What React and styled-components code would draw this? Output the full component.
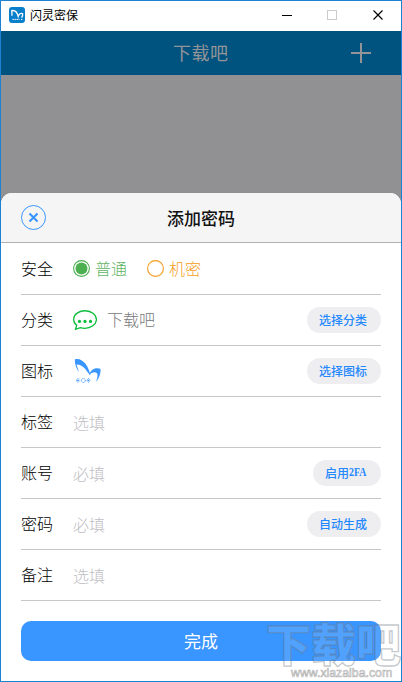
import React, { useState } from 'react';
import styled, { createGlobalStyle } from 'styled-components';

const palette = {
	blue: '#3995ff',
	border: '#1c83d4',
	navy: '#00537f',
	line: '#c7c7c8',
	green: '#4caf50',
	orange: '#f39c22',
};

const levels = [
	{ id: 'normal', label: '普通', color: palette.green, text: '#62b566' },
	{ id: 'secret', label: '机密', color: palette.orange, text: '#f49d20' },
];

export default function App() {
	const [level, setLevel] = useState('normal');

	return (
		<>
			<GlobalStyle />
			<Window>
				<TitleBar>
					<AppIcon viewBox="0 0 16 16">
						<rect width="16" height="16" rx="3" fill="#087fcb" />
						<path
							d="M3 8.8 2.8 3.6C6.2 3 8.2 5.6 9.2 9.4 10 7 11.8 5.8 13.6 6.6 13.9 8.2 13.4 9.6 12.6 10.6"
							fill="none"
							stroke="#fff"
							strokeWidth="1.3"
						/>
						<path d="M3.5 12.4h7M12 12.4h1.5" stroke="#fff" strokeDasharray="1.4 .6" />
					</AppIcon>
					<AppName>闪灵密保</AppName>
					<WindowControls viewBox="0 0 104 12" fill="none" shapeRendering="crispEdges">
						<path d="M0 6.5h10" stroke="#000" />
						<rect x="45.5" y="1.5" width="9" height="9" stroke="#ccc" />
						<path d="M91.5 1.5l9 9M100.5 1.5l-9 9" stroke="#000" strokeWidth="1.2" shapeRendering="auto" />
					</WindowControls>
				</TitleBar>
				<NavBar>
					<NavTitle>下载吧</NavTitle>
					<AddIcon viewBox="0 0 20 20">
						<path d="M0 10h20M10 0v20" stroke="#949498" strokeWidth="2" />
					</AddIcon>
				</NavBar>
				<Sheet>
					<SheetHeader>
						<CloseIcon viewBox="0 0 25 25" fill="none" stroke={palette.blue}>
							<circle cx="12.5" cy="12.5" r="12" />
							<path d="M8.5 8.5l8 8M16.5 8.5l-8 8" strokeWidth="2.1" />
						</CloseIcon>
						添加密码
					</SheetHeader>
					<Form>
						<Row $first>
							<Label>安全</Label>
							{levels.map(item => (
								<Option key={item.id} $color={item.text} onClick={() => setLevel(item.id)}>
									<RadioIcon viewBox="0 0 17 17" fill="none">
										<circle cx="8.5" cy="8.5" r="7.9" stroke={item.color} strokeWidth="1.1" />
										{level === item.id && <circle cx="8.5" cy="8.5" r="6" fill={item.color} />}
									</RadioIcon>
									<Text>{item.label}</Text>
								</Option>
							))}
						</Row>
						<Row>
							<Label>分类</Label>
							<ChatIcon viewBox="0 0 24 20" fill="none">
								<path
									d="M3.7 15.2C-.8 11.6-.1 5.7 4.5 2.9c4.5-3 11.1-2.9 15.5.4 4.8 3.5 4.4 9.4-.2 12.5-3.7 2.5-8.3 3-12.5 1.8L2.5 19.3l1.2-4.1Z"
									stroke="#0bbd3b"
									strokeWidth="1.3"
								/>
								<g fill="#0bbd3b">
									<circle cx="6.5" cy="11.4" r="1.6" />
									<circle cx="12" cy="11.4" r="1.6" />
									<circle cx="17.5" cy="11.4" r="1.6" />
								</g>
							</ChatIcon>
							<Category>下载吧</Category>
							<Pill>选择分类</Pill>
						</Row>
						<Row>
							<Label>图标</Label>
							<LogoIcon viewBox="0 0 28 26">
								<g fill={palette.blue}>
									<path d="M2 1.2C9.5-.8 15.8 8.1 17.5 17.5 13.7 13.7 11 6.6 3.5 6.5L6 14.2C3 9.7 1.4 5.2 2 1.2Z" />
									<path d="M16.4 16.5C17.6 11.7 21.9 8.9 27.4 10.7 28.1 14.7 26.4 20.6 22.7 24 24.5 20.3 24.9 17.1 24.1 15.3 21.4 13.2 18.7 14.8 16.4 16.5Z" />
								</g>
								<path
									d="M3 22.5h4M5 20v5M3.5 21l3 3M6.5 21l-3 3M13.5 22.5h4M15.5 20v5M14 21l3 3M17 21l-3 3"
									stroke={palette.blue}
									strokeWidth=".7"
									strokeDasharray="1.2 .6"
								/>
								<circle
									cx="10.3"
									cy="22.5"
									r="2"
									fill="none"
									stroke={palette.blue}
									strokeWidth=".9"
									strokeDasharray="1.2 .6"
								/>
							</LogoIcon>
							<Pill>选择图标</Pill>
						</Row>
						<Row>
							<Label>标签</Label>
							<Field placeholder="选填" />
						</Row>
						<Row>
							<Label>账号</Label>
							<Field placeholder="必填" />
							<Pill $narrow>
								启用<Latin>2FA</Latin>
							</Pill>
						</Row>
						<Row>
							<Label>密码</Label>
							<Field placeholder="必填" />
							<Pill>自动生成</Pill>
						</Row>
						<Row>
							<Label>备注</Label>
							<Field placeholder="选填" />
						</Row>
						<Submit>完成</Submit>
					</Form>
				</Sheet>
				<Watermark>
					<WatermarkName>下载吧</WatermarkName>
					<WatermarkUrl>www.xiazaiba.com</WatermarkUrl>
				</Watermark>
			</Window>
		</>
	);
}

const GlobalStyle = createGlobalStyle`
	* {
		box-sizing: border-box;
	}

	body {
		margin: 0;
		overflow: hidden;
	}

	body, button, input {
		font-family: 'Noto Sans CJK SC', sans-serif;
	}
`;

const Window = styled.div`
	position: relative;
	display: flex;
	flex-direction: column;
	width: 402px;
	height: 682px;
	overflow: hidden;
	border: 1px solid ${palette.border};
	background-color: #919194;
`;

const TitleBar = styled.header`
	display: flex;
	align-items: center;
	flex: 0 0 30px;
	padding: 0 15px 2px 8px;
	background-color: #fff;
`;

const AppIcon = styled.svg`
	width: 16px;
	height: 16px;
`;

const AppName = styled.div`
	margin-left: 5px;
	color: #000;
	font-size: 12px;
	line-height: 16px;
`;

const WindowControls = styled.svg`
	width: 104px;
	height: 12px;
	margin-left: auto;
`;

const NavBar = styled.nav`
	display: flex;
	align-items: center;
	flex: 0 0 44px;
	justify-content: space-between;
	padding: 0 30px 0 172px;
	background-color: ${palette.navy};
`;

const NavTitle = styled.div`
	padding-bottom: 3px;
	color: #949498;
	font-size: 18px;
	letter-spacing: 0.5px;
`;

const AddIcon = styled.svg`
	width: 20px;
	height: 20px;
`;

const Sheet = styled.section`
	flex: 1;
	margin-top: 118px;
	overflow: hidden;
	border-radius: 11px 11px 0 0;
	background-color: #fff;
`;

const SheetHeader = styled.div`
	display: flex;
	align-items: center;
	gap: 121px;
	height: 50px;
	padding-left: 20px;
	border-bottom: 1px solid #b2b2b3;
	background-color: #f5f5f6;
	color: #111;
	font-size: 17px;
	font-weight: 500;
`;

const CloseIcon = styled.svg`
	width: 25px;
	height: 25px;
`;

const Form = styled.div`
	display: flex;
	flex-direction: column;
	padding: 0 20px;
`;

const Row = styled.div`
	display: flex;
	align-items: center;
	height: ${props => (props.$first ? '52px' : '51px')};
	border-bottom: 1px solid ${palette.line};
	font-size: 16px;
	font-weight: 300;
`;

const Text = styled.div`
	padding-bottom: 2px;
`;

const Label = styled(Text)`
	width: 52px;
	color: #000;
`;

const Option = styled.div`
	display: flex;
	align-items: center;
	gap: 5px;
	margin-right: 20px;
	color: ${props => props.$color};
	cursor: pointer;
`;

const RadioIcon = styled.svg`
	width: 17px;
	height: 17px;
`;

const ChatIcon = styled.svg`
	width: 24px;
	height: 20px;
`;

const Category = styled(Text)`
	margin-left: 10px;
	color: #77777a;
`;

const LogoIcon = styled.svg`
	width: 28px;
	height: 26px;
`;

const Field = styled.input`
	flex: 1;
	min-width: 0;
	padding: 0;
	border: 0;
	outline: 0;
	background: none;
	font-size: 16px;
	font-weight: 300;

	&::placeholder {
		color: #c0c0c4;
	}
`;

const Pill = styled.button`
	display: flex;
	align-items: center;
	justify-content: center;
	width: ${props => (props.$narrow ? '68px' : '74px')};
	height: 26px;
	margin-left: auto;
	padding: 0 2px 2px 0;
	border: 0;
	border-radius: 13px;
	background-color: #eeeef0;
	color: #2488ff;
	font-size: 12px;
	font-weight: 500;
	white-space: nowrap;
`;

const Latin = styled.span`
	width: 18px;
	font-family: 'Liberation Serif', serif;
	font-size: 12px;
	font-weight: 700;
	transform: scaleX(0.82);
	transform-origin: left;
`;

const Submit = styled.button`
	height: 40px;
	margin-top: 20px;
	padding: 0 0 2px;
	border: 0;
	border-radius: 10px;
	background-color: ${palette.blue};
	color: #fff;
	font-size: 17px;
`;

/* translucent stamp over the bottom right corner */
const Watermark = styled.div`
	position: absolute;
	right: 0;
	bottom: 0;
	width: 135px;
	height: 57px;
	pointer-events: none;
	white-space: nowrap;
`;

const WatermarkName = styled.div`
	height: 42px;
	color: rgba(255, 255, 255, 0.15);
	font-size: 45px;
	font-weight: 900;
	line-height: 38px;
	-webkit-text-stroke: 1.3px rgba(105, 115, 125, 0.4);
`;

const WatermarkUrl = styled.div`
	margin-left: 25px;
	color: rgba(255, 255, 255, 0.7);
	font-family: 'Liberation Sans', sans-serif;
	font-size: 12.3px;
	line-height: 15px;
	-webkit-text-stroke: 0.7px rgba(130, 130, 130, 0.6);
`;
